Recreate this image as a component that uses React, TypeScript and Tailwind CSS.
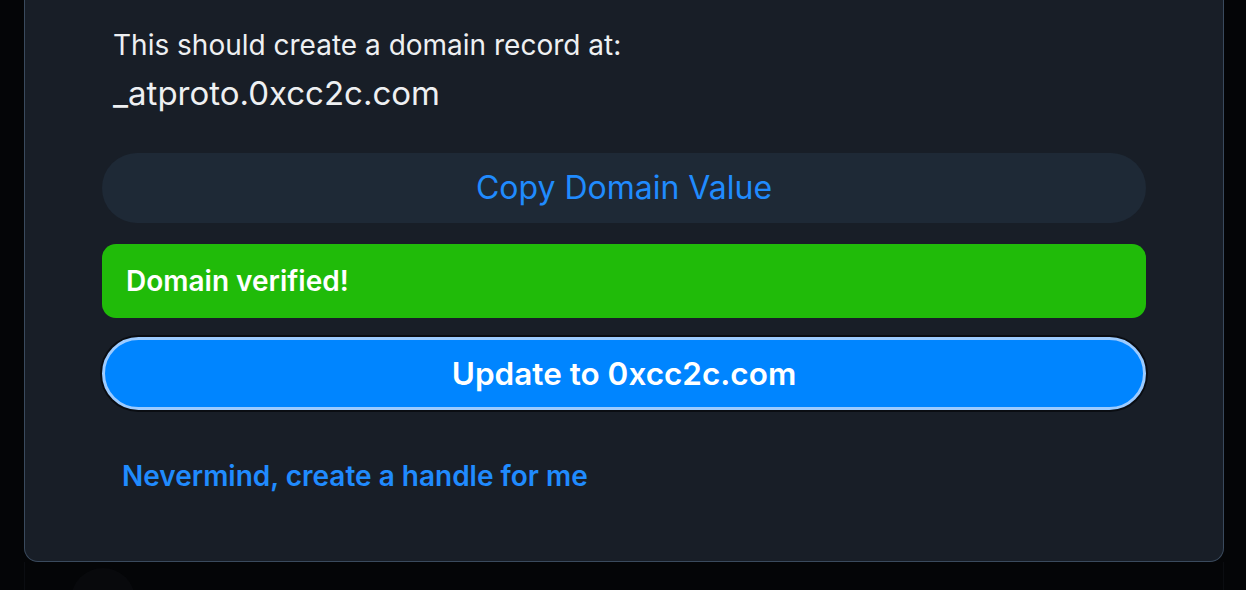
import React from "react";

export default function App() {
  return (
    <div
      className="h-[590px] w-[1246px] overflow-hidden bg-[#040507] flex flex-col"
      style={{ fontFamily: "Inter, 'Noto Sans', sans-serif" }}
    >
      <div className="mx-[24px] w-[1200px] shrink-0 rounded-b-[14px] border border-t-0 border-[#3a4a5d] bg-[#181e27] px-[77px] pt-[28px] pb-[68px]">
        <div className="pl-[11px]">
          <div className="text-[28px] leading-[34px] text-[#eef0f2]">This should create a domain record at:</div>
          <div className="mt-[11px] text-[33px] leading-[40px] text-[#eef0f2]">_atproto.0xcc2c.com</div>
        </div>
        <button className="mt-[40px] flex h-[70px] w-full items-center justify-center rounded-full bg-[#1e2936] text-[32px] text-[#208bfe]">
          Copy Domain Value
        </button>
        <div className="mt-[21px] flex h-[74px] items-center rounded-[14px] bg-[#20bb09] px-[24px] text-[28px] font-semibold text-white">
          Domain verified!
        </div>
        <button className="mt-[19px] flex h-[73px] w-full items-center justify-center rounded-full border-[3px] border-[#9ccbff] bg-[#0085ff] text-[31.5px] font-semibold text-white ring-2 ring-[#0a0d12]">
          Update to 0xcc2c.com
        </button>
        <div className="mt-[49px] pl-[20px] text-[28px] leading-[34px] font-semibold text-[#208bfe]">
          Nevermind, create a handle for me
        </div>
      </div>
      <div className="relative mx-[24px] w-[1200px] flex-1 border-x border-[#0b0d11]">
        <div className="absolute left-[46px] top-[6px] h-[64px] w-[64px] rounded-full bg-[#08090c]" />
      </div>
    </div>
  );
}
